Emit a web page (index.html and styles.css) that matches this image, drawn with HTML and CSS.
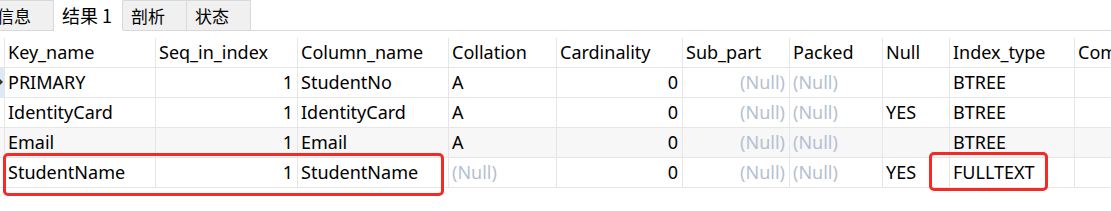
FILE: index.html
```html
<!DOCTYPE html>
<html lang="zh-CN">
<head>
    <meta charset="UTF-8">
    <title>Index result</title>
    <link rel="stylesheet" href="styles.css">
</head>
<body>
    <div class="tabs">
        <div class="tab tab-cut">信息</div>
        <div class="tab active">结果 1</div>
        <div class="tab">剖析</div>
        <div class="tab">状态</div>
        <div class="tab-rest"></div>
    </div>

    <div class="grid">
        <div class="row head">
            <div class="cell mark"></div>
            <div class="cell">Key_name</div>
            <div class="cell">Seq_in_index</div>
            <div class="cell">Column_name</div>
            <div class="cell">Collation</div>
            <div class="cell">Cardinality</div>
            <div class="cell">Sub_part</div>
            <div class="cell">Packed</div>
            <div class="cell">Null</div>
            <div class="cell">Index_type</div>
            <div class="cell">Comment</div>
        </div>
        <div class="row">
            <div class="cell mark current"><span class="arrow"></span></div>
            <div class="cell">PRIMARY</div>
            <div class="cell num">1</div>
            <div class="cell">StudentNo</div>
            <div class="cell">A</div>
            <div class="cell num">0</div>
            <div class="cell num null">(Null)</div>
            <div class="cell null">(Null)</div>
            <div class="cell"></div>
            <div class="cell">BTREE</div>
            <div class="cell"></div>
        </div>
        <div class="row">
            <div class="cell mark"></div>
            <div class="cell">IdentityCard</div>
            <div class="cell num">1</div>
            <div class="cell">IdentityCard</div>
            <div class="cell">A</div>
            <div class="cell num">0</div>
            <div class="cell num null">(Null)</div>
            <div class="cell null">(Null)</div>
            <div class="cell">YES</div>
            <div class="cell">BTREE</div>
            <div class="cell"></div>
        </div>
        <div class="row alt">
            <div class="cell mark"></div>
            <div class="cell">Email</div>
            <div class="cell num">1</div>
            <div class="cell">Email</div>
            <div class="cell">A</div>
            <div class="cell num">0</div>
            <div class="cell num null">(Null)</div>
            <div class="cell null">(Null)</div>
            <div class="cell"></div>
            <div class="cell">BTREE</div>
            <div class="cell"></div>
        </div>
        <div class="row">
            <div class="cell mark"></div>
            <div class="cell">StudentName</div>
            <div class="cell num">1</div>
            <div class="cell">StudentName</div>
            <div class="cell null">(Null)</div>
            <div class="cell num">0</div>
            <div class="cell num null">(Null)</div>
            <div class="cell null">(Null)</div>
            <div class="cell">YES</div>
            <div class="cell">FULLTEXT</div>
            <div class="cell"></div>
        </div>

        <!-- highlight boxes drawn over the grid -->
        <div class="note-box box-name"></div>
        <div class="note-box box-type"></div>
    </div>
</body>
</html>
```

FILE: styles.css
```css
body {
    margin: 0;
    background-color: #fff;
    font-family: "Noto Sans", "Noto Sans CJK SC", sans-serif;
    font-size: 18px;
    color: #000;
    width: 1111px;
    height: 211px;
    overflow: hidden;
}

/* Tab strip */
.tabs {
    display: flex;
    height: 31px;
}

.tab {
    box-sizing: border-box;
    height: 31px;
    padding: 0 8px;
    background-color: #f0f0f0;
    border: 1px solid #d9d9d9;
    border-left: none;
    font-family: "Noto Sans CJK SC", sans-serif;
    font-size: 17px;
    line-height: 29px;
    width: 64px;
}

.tab-cut {
    width: 54px;
    padding: 0;
    text-indent: -3px;
}

.tab.active {
    width: 69px;
    background-color: #fff;
    border-bottom-color: #fff;
    border-top-color: #fff;
    padding-left: 8px;
    font-size: 18px;
}

.tab-rest {
    flex: 1;
    border-bottom: 1px solid #d9d9d9;
}

/* Result grid */
.grid {
    position: relative;
    margin-top: 7px;
}

.row {
    display: grid;
    grid-template-columns: 4px 151px 142px 151px 108px 126px 107px 93px 67px 125px 1fr;
    box-sizing: border-box;
    height: 30px;
    border-bottom: 1px solid #e6e6e6;
}

.row.alt {
    background-color: #f7f7f7;
}

.cell {
    box-sizing: border-box;
    border-left: 1px solid #e6e6e6;
    padding: 0 3px;
    line-height: 29px;
    white-space: nowrap;
    overflow: hidden;
}

.cell.mark {
    border-left: none;
    padding: 0;
    position: relative;
}

.mark.current {
    background-color: #dde9f6;
}

.arrow {
    position: absolute;
    left: 0;
    top: 11px;
    border-left: 3px solid #333;
    border-top: 3px solid transparent;
    border-bottom: 3px solid transparent;
}

.cell.num {
    text-align: right;
    padding-right: 4px;
}

.cell.null {
    color: #b6bfd1;
}

.note-box {
    position: absolute;
    box-sizing: border-box;
    border: 3px solid #f52a24;
    border-radius: 5px;
}

.box-name {
    left: 3px;
    top: 115px;
    width: 441px;
    height: 43px;
}

.box-type {
    left: 929px;
    top: 114px;
    width: 119px;
    height: 39px;
}
```
